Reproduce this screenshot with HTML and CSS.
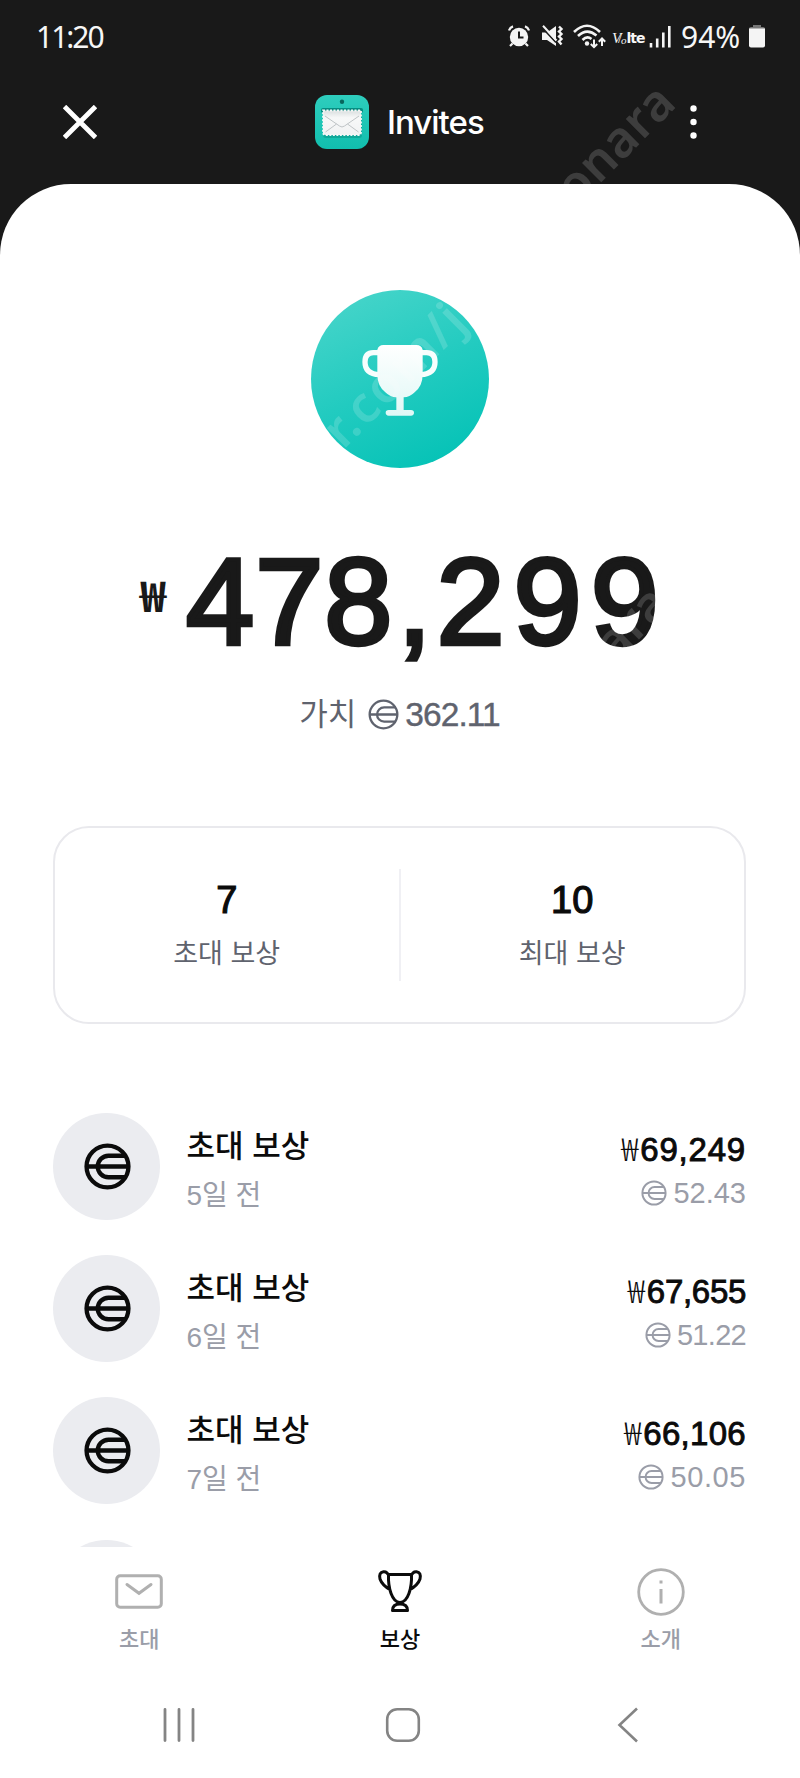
FILE: index.html
```html
<!DOCTYPE html>
<html lang="ko">
<head>
<meta charset="utf-8">
<title>Invites</title>
<link rel="stylesheet" href="styles.css">
</head>
<body>
<svg class="defs" aria-hidden="true">
  <symbol id="coin" viewBox="0 0 48 48">
    <g fill="none" stroke="currentColor">
      <circle cx="24" cy="24" r="21.4"/>
      <path d="M3 24H45M42.5 13H25a11 11 0 0 0 0 22H42.5"/>
    </g>
  </symbol>
</svg>
<div class="screen">
  <header class="top">
    <div class="status">
      <span class="time">11:20</span>
      <div class="status-icons">
        <svg class="i-alarm" width="22" height="22" viewBox="0 0 22 22"><circle cx="11" cy="12" r="9.2" fill="#f4f4f4"/><path d="M4.5 18.5L2 21M17.500 18.500L20 21M1 5.500Q2 2.500 5 1.400M21 5.500Q20 2.500 17 1.400" stroke="#f4f4f4" stroke-width="2.200" fill="none"/><path d="M11 6.500V12.500H15.500" stroke="#191919" stroke-width="2" fill="none"/></svg>
        <svg class="i-mute" width="23" height="22" viewBox="0 0 23 22"><path d="M1 7.500H6L15 1V21L6 15H1Z" fill="#f4f4f4"/><path d="M1 2.500L15 17.500" stroke="#191919" stroke-width="1.800"/><path d="M2 0.800L15.500 15.500" stroke="#f4f4f4" stroke-width="2"/><path d="M18 1.500l2.500 2.500-2.500 2.500 2.500 2.500-2.500 2.500 2.500 2.500-2.500 2.500 2.500 3" stroke="#f4f4f4" stroke-width="2.400" fill="none"/></svg>
        <svg class="i-wifi" width="33" height="25" viewBox="0 0 33 25"><g fill="none" stroke="#f4f4f4" stroke-width="2.600"><path d="M1 8Q14 -4.500 27 8M5 12Q14 3.500 23.500 11.500M9.500 16Q14 11.500 18.500 15"/></g><circle cx="14" cy="19.500" r="2.200" fill="#f4f4f4"/><path d="M21 15.500V23M17.800 20l3.200 3.200 3.200-3.200M29 22V14.500M25.800 17.700L29 14.500l3.200 3.200" fill="none" stroke="#f4f4f4" stroke-width="2"/></svg>
        <span class="volte"><i>V</i><b class="slash">/</b><i class="o">o</i><b>lte</b></span>
        <svg class="i-signal" width="22" height="23" viewBox="0 0 22 23"><path d="M2 18V22.500M8.200 13.500V22.500M14.300 7.500V22.500M20.300 1V22.500" stroke="#f4f4f4" stroke-width="2.600"/></svg>
        <span class="percent">94%</span>
        <svg class="i-battery" width="16" height="24" viewBox="0 0 16 24"><path d="M4 1H12V3H14Q16 3 16 5H0Q0 3 2 3H4Z" fill="#777"/><path d="M0 4.500H16V21.500Q16 23.500 14 23.500H2Q0 23.500 0 21.500Z" fill="#f4f4f4"/></svg>
      </div>
    </div>
    <div class="appbar">
      <svg class="close" width="34" height="34" viewBox="0 0 34 34"><path d="M1.500 1.500L32.500 32.500M32.500 1.500L1.500 32.500" stroke="#fff" stroke-width="4.800"/></svg>
      <div class="brand">
        <svg width="54" height="54" viewBox="0 0 54 54">
          <defs><linearGradient id="tile" x1="0" y1="0" x2="0" y2="1"><stop offset="0" stop-color="#2ecdbd"/><stop offset="1" stop-color="#11bfae"/></linearGradient>
          <linearGradient id="paper" x1="0" y1="0" x2="0" y2="1"><stop offset="0" stop-color="#d9dede"/><stop offset=".3" stop-color="#f7f8f8"/><stop offset="1" stop-color="#f1f2f3"/></linearGradient></defs>
          <rect width="54" height="54" rx="12" fill="url(#tile)"/>
          <circle cx="27" cy="6.700" r="2.200" fill="#08665d"/>
          <rect x="6" y="13" width="42" height="5" rx="2" fill="#078e82"/>
          <rect x="8" y="18" width="39" height="25" rx="3" fill="#078e82" opacity=".5"/>
          <path d="M8 15.500H46V37.500Q46 40 43 40H11Q8 40 8 37.500Z" fill="url(#paper)" stroke="#f5f7f7" stroke-width="1.800" stroke-dasharray="2 1.500"/>
          <path d="M10 21L24.500 31Q27 33 29.500 31L44 21M10.500 37L21.500 29M43.500 37L32.500 29" fill="none" stroke="#bfc4c6" stroke-width="1"/>
        </svg>
        <span>Invites</span>
      </div>
      <svg class="more" width="7" height="34" viewBox="0 0 7 34"><g fill="#fff"><circle cx="3.500" cy="3.500" r="3.200"/><circle cx="3.500" cy="17" r="3.200"/><circle cx="3.500" cy="30.500" r="3.200"/></g></svg>
    </div>
    <span class="mark mark-top">onara</span>
  </header>

  <main class="sheet">
    <div class="medal">
      <svg width="76" height="71" viewBox="216 225 228 213">
        <defs><linearGradient id="cup" x1="0" y1="0" x2="0" y2="1"><stop offset="0" stop-color="#fff"/><stop offset="1" stop-color="#dff8f6"/></linearGradient></defs>
        <g fill="none" stroke="#f7fefd" stroke-width="16"><path d="M268 248H250Q225 248 225 276Q225 312 268 314M392 248H410Q435 248 435 276Q435 312 392 314"/></g>
        <path d="M280 225H380Q394 225 398 239V312Q398 348 374 367Q359 382 341 382V420H363Q372 420 372 428.500T363 437H296Q287 437 287 428.500T296 420H319V382Q301 382 286 367Q262 348 262 312V239Q266 225 280 225Z" fill="url(#cup)"/>
      </svg>
      <span class="mark mark-medal">r.com/j</span>
    </div>

    <div class="total">
      <span class="won">₩</span>
      <span class="figure"><span class="lead">47</span><span class="mid">8,</span>299<span class="mark mark-total">ara</span></span>
    </div>
    <div class="worth"><span class="ko">가치</span><svg class="coin"><use href="#coin"/></svg><span class="num">362.11</span></div>

    <section class="card">
      <div class="stat"><strong>7</strong><span>초대 보상</span></div>
      <div class="rule"></div>
      <div class="stat"><strong>10</strong><span>최대 보상</span></div>
    </section>

    <ul class="list">
      <li>
        <div class="avatar"><svg class="coin"><use href="#coin"/></svg></div>
        <div class="what"><b>초대 보상</b><span>5일 전</span></div>
        <div class="amount"><b><i>₩</i>69,249</b><span><svg class="coin"><use href="#coin"/></svg>52.43</span></div>
      </li>
      <li>
        <div class="avatar"><svg class="coin"><use href="#coin"/></svg></div>
        <div class="what"><b>초대 보상</b><span>6일 전</span></div>
        <div class="amount tight"><b><i>₩</i>67,655</b><span><svg class="coin"><use href="#coin"/></svg>51.22</span></div>
      </li>
      <li>
        <div class="avatar"><svg class="coin"><use href="#coin"/></svg></div>
        <div class="what"><b>초대 보상</b><span>7일 전</span></div>
        <div class="amount wide"><b><i>₩</i>66,106</b><span><svg class="coin"><use href="#coin"/></svg>50.05</span></div>
      </li>
      <li><div class="avatar"></div></li>
    </ul>
  </main>

  <nav class="tabs">
    <a><svg width="48" height="48" viewBox="0 0 48 48" fill="none" stroke="#b0b0b0" stroke-width="3"><rect x="1.700" y="7.700" width="44.600" height="31.600" rx="3.500"/><path d="M12 16.500L24 25.300L36 16.500" stroke-linecap="round"/></svg><span>초대</span></a>
    <a class="on"><svg width="48" height="48" viewBox="0 0 48 48" fill="none" stroke="#0b0b0b" stroke-width="3" stroke-linejoin="round"><path d="M12.500 6.500H35.500C36 20 32 34.500 24 34.500S12 20 12.500 6.500ZM13 8.500Q11.500 3.500 7.500 3.800Q2.500 4.500 4 11Q6 17 14.500 22M35 8.500Q36.500 3.500 40.500 3.800Q45.500 4.500 44 11Q42 17 33.500 22M16.500 42.500Q16.500 36 24 36T31.500 42.500Z"/></svg><span>보상</span></a>
    <a><svg width="48" height="48" viewBox="0 0 48 48"><circle cx="24" cy="24" r="22.300" fill="none" stroke="#b0b0b0" stroke-width="2.800"/><path d="M24 12.500V15.500M24 21V35.500" stroke="#b0b0b0" stroke-width="3"/></svg><span>소개</span></a>
  </nav>

  <footer class="system">
    <svg width="34" height="34" viewBox="0 0 34 34"><path d="M3 1.500V32.500M17 1.500V32.500M31 1.500V32.500" stroke="#848484" stroke-width="2.800" stroke-linecap="round"/></svg>
    <svg class="home" width="36" height="36" viewBox="0 0 36 36"><rect x="2.200" y="2.200" width="31.600" height="31.600" rx="10" fill="none" stroke="#848484" stroke-width="2.600"/></svg>
    <svg width="22" height="36" viewBox="0 0 22 36"><path d="M20 1.500L2.500 18L20 34.500" fill="none" stroke="#848484" stroke-width="2.600"/></svg>
  </footer>
</div>
</body>
</html>
```
FILE: styles.css
```css
* { box-sizing: border-box; }
body { margin: 0; background: #fff; font-family: "Liberation Sans", "Noto Sans CJK KR", sans-serif; color: #0b0b0b; }
.defs { position: absolute; width: 0; height: 0; }
.screen { width: 800px; height: 1778px; display: flex; flex-direction: column; background: #fff; overflow: hidden; }
.coin { display: block; flex: none; stroke-width: 3.6; }

.top { position: relative; height: 260px; margin-bottom: -76.5px; background: #191919; overflow: hidden; color: #f6f6f6; flex: none; }
.status { height: 72px; padding: 0 35px; display: flex; justify-content: space-between; align-items: center; font-family: "Noto Sans", sans-serif; font-size: 30px; }
.time { letter-spacing: -2px; padding-left: 1px; }
.status-icons { display: flex; align-items: center; }
.i-mute { margin-left: 11px; }
.i-wifi { margin-left: 9px; }
.volte { width: 30px; margin: 3px 0 0 6px; display: flex; align-items: center; font: 15px/20px "Liberation Serif", serif; }
.volte i { width: 6px; }
.volte .slash { width: 3px; font-weight: 400; }
.volte .o { font-size: 11px; padding-top: 4px; }
.volte b:last-child { font: 700 14px/20px "DejaVu Sans", sans-serif; letter-spacing: -1px; }
.i-signal { margin-left: 7px; }
.percent { margin-left: 10px; width: 64px; letter-spacing: 0; white-space: nowrap; }
.i-battery { margin-left: 4px; }
.appbar { height: 99px; padding: 0 103px 0 63px; display: grid; grid-template-columns: 34px 1fr 7px; align-items: center; }
.brand { display: flex; align-items: center; gap: 18px; padding-left: 218px; font-family: Inter, sans-serif; font-size: 33px; font-weight: 500; letter-spacing: -1px; color: #fff; }
.mark { position: absolute; font: 600 50px/60px "Noto Sans", sans-serif; color: rgba(255,255,255,.16); white-space: nowrap; transform: rotate(-45deg); transform-origin: 0 100%; letter-spacing: .5px; -webkit-text-stroke: 0; }
.mark-top { left: 584px; top: 155px; }

.sheet { position: relative; height: 1363px; flex: none; padding: 106px 54px 0 53px; border-radius: 71px 71px 0 0; background: #fff; overflow: hidden; display: flex; flex-direction: column; align-items: center; }
.medal { position: relative; flex: none; width: 178px; height: 178px; border-radius: 50%; overflow: hidden; background: linear-gradient(155deg, #48d5ca 5%, #22cbc0 50%, #04c2b6 92%); display: flex; justify-content: center; padding-top: 55px; }
.medal .mark { left: 40px; top: 108px; letter-spacing: 2px; }
.total { height: 150px; margin-top: 59px; display: flex; align-items: center; align-self: flex-start; padding-left: 87px; color: #191919; }
.won { width: 28px; margin-top: -16px; font: 700 42px/50px "Noto Sans CJK KR", sans-serif; transform: scaleX(1.05); transform-origin: 0 50%; }
.figure { position: relative; margin-left: 18px; font-size: 122.500px; line-height: 150px; -webkit-text-stroke: 4.300px #191919; letter-spacing: 9px; white-space: nowrap; }
.figure .lead { letter-spacing: 1px; }
.figure .mid { letter-spacing: 5px; }
.figure .mark { left: 437px; top: 84px; }
.worth { height: 50px; margin: 15px 0 0 0; display: flex; align-items: center; color: #5f636e; }
.worth .ko { font-size: 31px; line-height: 46px; }
.worth .coin { width: 31px; height: 31px; margin: 0 6px 0 12px; }
.worth .num { font-size: 33.500px; letter-spacing: -.9px; -webkit-text-stroke: .4px; }

.card { width: 693px; height: 198px; margin-top: 88px; flex: none; border: 2px solid #e9e9ed; border-radius: 36px; display: flex; align-items: center; }
.stat { flex: 1; display: flex; flex-direction: column; align-items: center; }
.stat strong { font-size: 38px; line-height: 46px; font-weight: 400; -webkit-text-stroke: 1.200px; margin-top: -1px; }
.stat span { font-size: 27px; line-height: 40px; margin-top: 9px; color: #5f636e; font-family: "Noto Sans CJK KR", sans-serif; }
.rule { width: 2px; height: 112px; background: #f0f0f4; }

.list { list-style: none; margin: 89.500px 0 0; padding: 0; width: 693px; }
.list li { height: 107px; margin-bottom: 35.200px; display: flex; align-items: center; }
.avatar { width: 107px; height: 107px; border-radius: 50%; background: #ebecf0; display: flex; align-items: center; justify-content: center; }
.avatar .coin { width: 47px; height: 47px; stroke-width: 4.400; margin-left: 2px; }
.what { margin: 5px 0 0 26.500px; flex: 1; display: flex; flex-direction: column; }
.what b { font: 500 31px/44px "Noto Sans CJK KR", sans-serif; }
.what span { font-size: 28px; line-height: 40px; margin-top: 10px; color: #9a9da8; }
.amount { display: flex; flex-direction: column; align-items: flex-end; padding-top: 9px; }
.amount b { display: flex; align-items: center; font-size: 33px; line-height: 44px; font-weight: 400; letter-spacing: .8px; -webkit-text-stroke: .9px; }
.amount i { width: 19px; font: 300 32px/44px "Noto Sans CJK KR", sans-serif; -webkit-text-stroke: 0; letter-spacing: 0; margin-top: -6px; }
.amount span { display: flex; align-items: center; font-size: 29px; line-height: 42px; color: #9a9da8; }
.amount.tight b { letter-spacing: -.3px; }
.amount.tight span { letter-spacing: -.7px; }
.amount.wide b { letter-spacing: .3px; }
.amount.wide span { letter-spacing: .6px; }
.amount .coin { width: 26px; height: 26px; margin-right: 6px; }

.tabs { height: 119px; padding: 21px 9px 0; display: grid; grid-template-columns: repeat(3, 1fr); background: #fff; flex: none; }
.tabs a { display: flex; flex-direction: column; align-items: center; color: #9a9da8; }
.tabs span { font: 500 22px/32px "Noto Sans CJK KR", sans-serif; margin-top: 5px; }
.tabs .on { color: #0b0b0b; }
.system { flex: 1; padding: 6px 161px 0 162px; display: flex; align-items: center; justify-content: space-between; }
.home { margin: 0 4px 0 -4px; }
```
